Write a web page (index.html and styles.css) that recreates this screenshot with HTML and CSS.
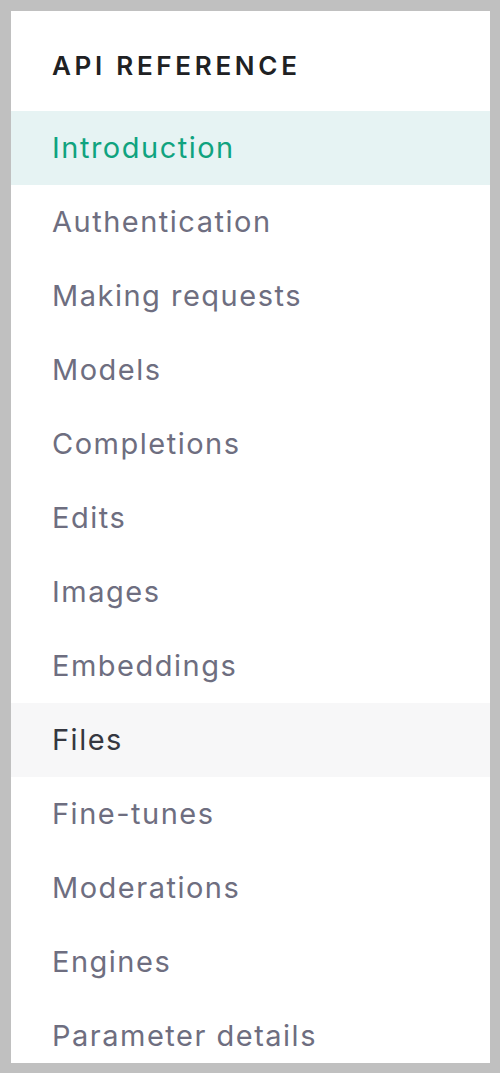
FILE: index.html
```html
<!DOCTYPE html>
<html lang="en">
<head>
<meta charset="utf-8">
<title>API Reference</title>
<link rel="stylesheet" href="styles.css">
</head>
<body>
<nav class="panel">
  <div class="heading">API REFERENCE</div>
  <ul class="menu">
    <li class="item active">Introduction</li>
    <li class="item">Authentication</li>
    <li class="item">Making requests</li>
    <li class="item">Models</li>
    <li class="item">Completions</li>
    <li class="item">Edits</li>
    <li class="item">Images</li>
    <li class="item">Embeddings</li>
    <li class="item hover">Files</li>
    <li class="item">Fine-tunes</li>
    <li class="item">Moderations</li>
    <li class="item">Engines</li>
    <li class="item">Parameter details</li>
  </ul>
</nav>
</body>
</html>
```
FILE: styles.css
```css
html, body {
  margin: 0;
  padding: 0;
}
body {
  background: #c0c0c0;
  padding: 11px 10px 10px 11px;
  font-family: Inter, "Noto Sans", "Liberation Sans", sans-serif;
  box-sizing: border-box;
  height: 1073px;
  overflow: hidden;
}
.panel {
  background: #ffffff;
  width: 479px;
  height: 1052px;
  box-sizing: border-box;
  overflow: hidden;
}
.heading {
  height: 100px;
  box-sizing: border-box;
  padding: 42px 0 0 41px;
  font-size: 26px;
  line-height: 26px;
  font-weight: 600;
  letter-spacing: 3.7px;
  color: #202123;
}
.menu {
  list-style: none;
  margin: 0;
  padding: 0;
}
.item {
  height: 74px;
  display: flex;
  align-items: center;
  padding-left: 41px;
  padding-bottom: 2px;
  box-sizing: border-box;
  font-size: 29px;
  letter-spacing: 1.5px;
  color: #6e6e80;
}
.item.active {
  background: #e6f3f3;
  color: #10a37f;
}
.item.hover {
  background: #f7f7f8;
  color: #353740;
}
```
